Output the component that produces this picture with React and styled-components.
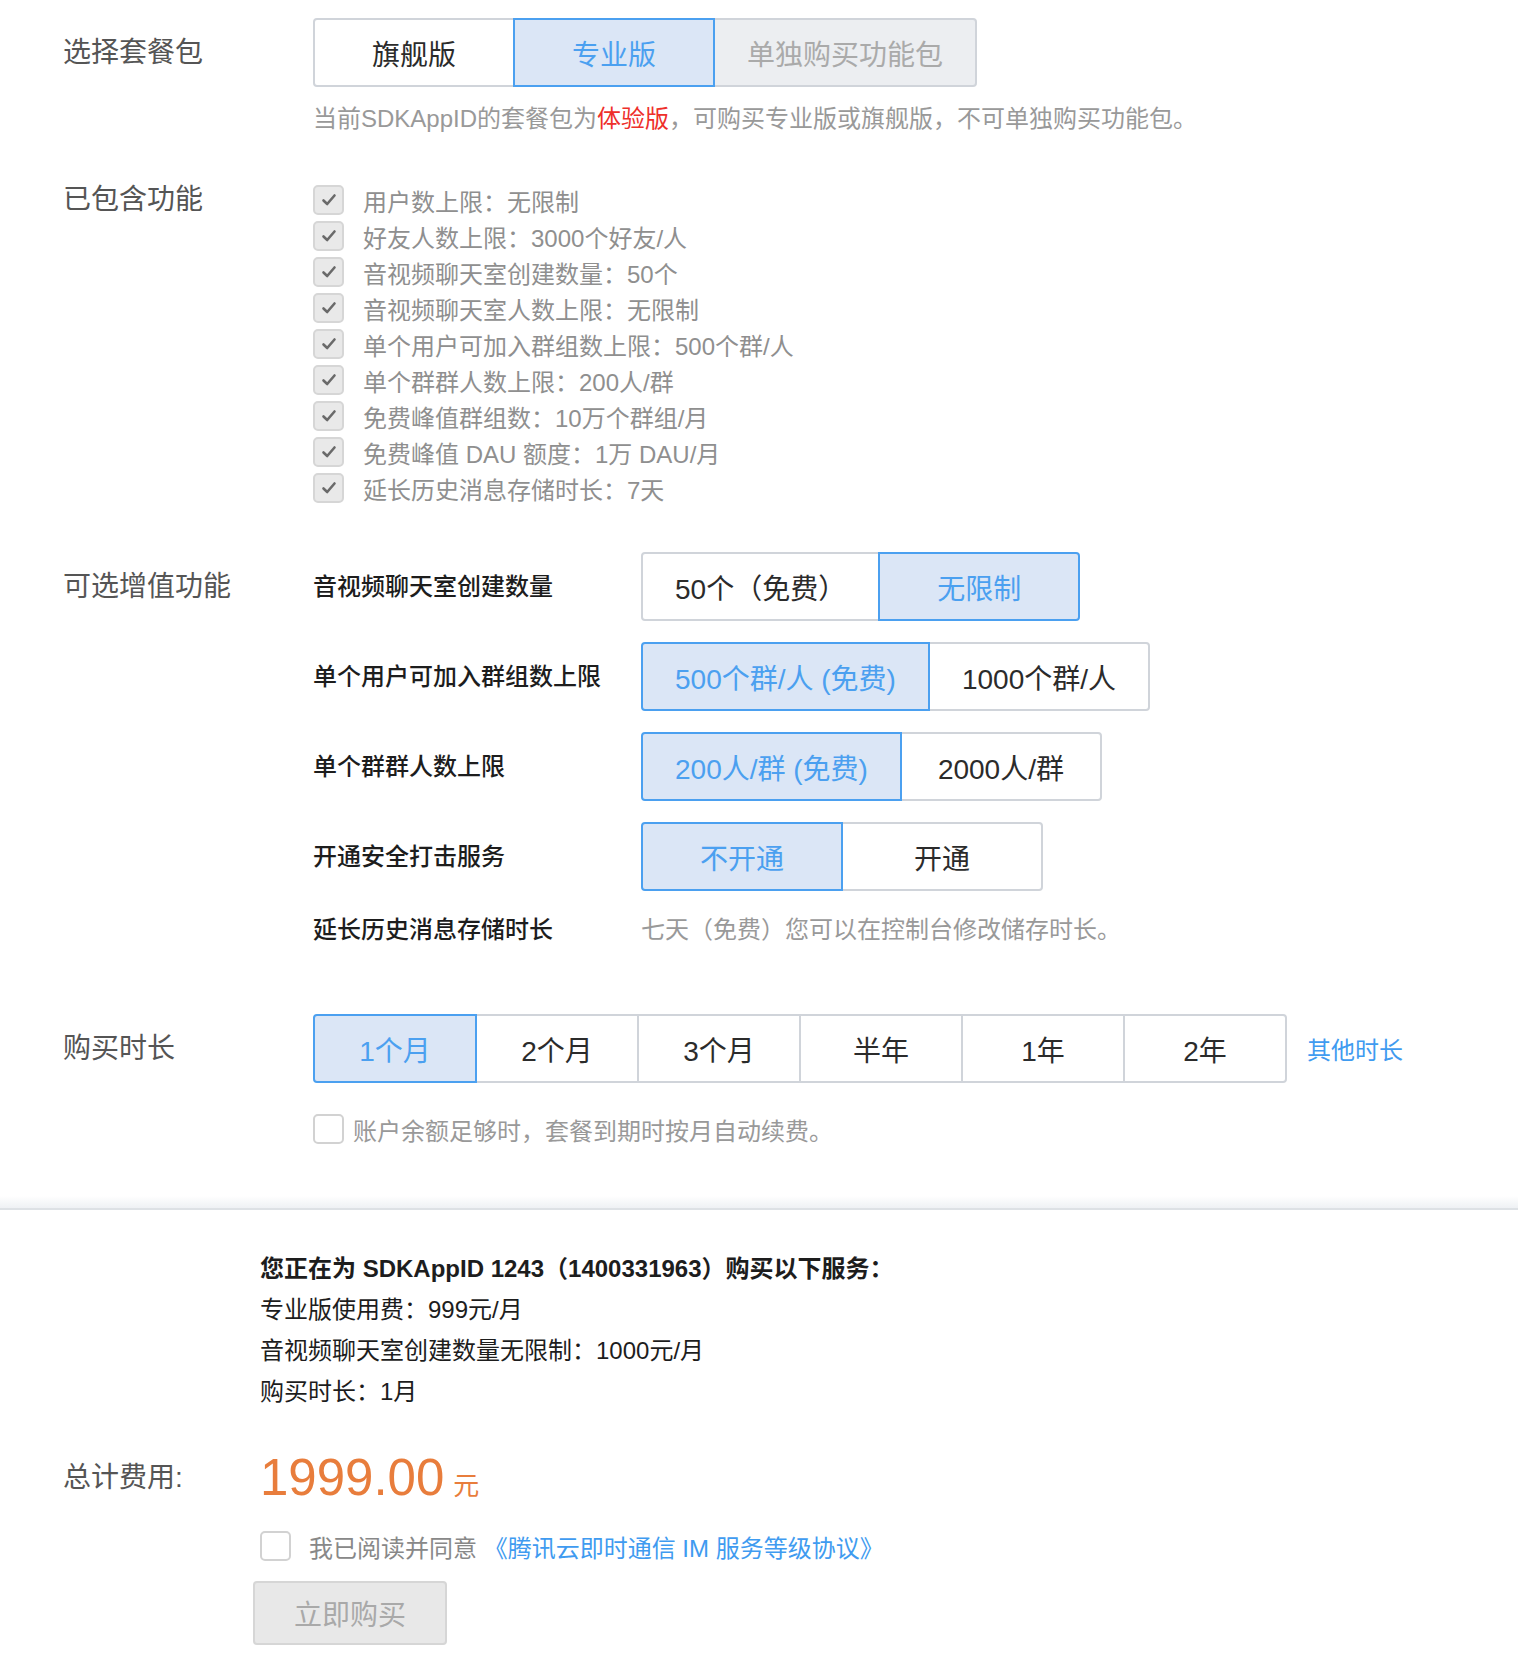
import React, { useState } from 'react';
import styled, { createGlobalStyle } from 'styled-components';

const GlobalStyle = createGlobalStyle`
  body {
    margin: 0;
    background: #fff;
    font-family: "Liberation Sans", "Noto Sans CJK SC", sans-serif;
    color: #333;
  }
`;

const Page = styled.div`
  padding-top: 18px;
  padding-bottom: 19px;
`;

const Section = styled.section`
  display: grid;
  grid-template-columns: ${({ labelWidth }) => labelWidth || 250}px 1fr;
  padding-left: 63px;
  margin-top: ${({ mt }) => mt || 0}px;
`;

const SectionLabel = styled.div`
  font-size: 28px;
  color: #555;
  line-height: ${({ lh }) => lh}px;
`;

const Content = styled.div`
  display: flex;
  flex-direction: column;
  align-items: flex-start;
`;

const Group = styled.div`
  display: flex;
`;

const Seg = styled.button`
  height: ${({ h }) => h || 69}px;
  min-width: ${({ w }) => w || 202}px;
  padding: 0 32px;
  margin: 0 0 0 -2px;
  font-family: inherit;
  font-size: 28px;
  border: 2px solid ${({ active }) => (active ? '#4ba0f0' : '#d0d4da')};
  background: ${({ active, disabled }) =>
    active ? '#dbe6f6' : disabled ? '#eceef1' : '#fff'};
  color: ${({ active, disabled }) =>
    active ? '#4ba0f0' : disabled ? '#aaa' : '#2b2b2b'};
  position: relative;
  z-index: ${({ active }) => (active ? 1 : 0)};
  cursor: pointer;
  white-space: nowrap;

  &:first-child {
    margin-left: 0;
    border-radius: 4px 0 0 4px;
  }
  &:last-child {
    border-radius: 0 4px 4px 0;
  }
`;

const Hint = styled.p`
  margin: 14px 0 0;
  font-size: 24px;
  line-height: 36px;
  color: #999;
`;

const Red = styled.span`
  color: #ee2f2a;
`;

const FeatureRow = styled.div`
  display: flex;
  align-items: center;
  height: 36px;
  gap: 19px;
  font-size: 24px;
  color: #8f8f8f;
`;

const Box = styled.span`
  width: 31px;
  height: 30px;
  box-sizing: border-box;
  border-radius: 5px;
  border: 2px solid ${({ checked }) => (checked ? '#d6d6d6' : '#d2d2d2')};
  background: ${({ checked }) => (checked ? '#e9e9e9' : '#fff')};
  display: flex;
  align-items: center;
  justify-content: center;
  flex-shrink: 0;
`;

const OptionRow = styled.div`
  display: grid;
  grid-template-columns: 328px auto;
  align-items: center;
  margin-top: ${({ mt }) => mt || 0}px;
`;

const SubLabel = styled.div`
  font-size: 24px;
  font-weight: 500;
  color: #1d1d1d;
  line-height: 36px;
`;

const Note = styled.div`
  font-size: 24px;
  color: #999;
  line-height: 36px;
`;

const DurationWrap = styled.div`
  display: flex;
  align-items: center;
  gap: 20px;
`;

const Link = styled.a`
  color: #3f9bf0;
  font-size: 24px;
  text-decoration: none;
  cursor: pointer;
`;

const CheckLine = styled.label`
  display: flex;
  align-items: center;
  gap: ${({ gap }) => gap}px;
  height: 36px;
  margin-top: ${({ mt }) => mt || 0}px;
  font-size: 24px;
  color: ${({ tone }) => tone || '#999'};
  cursor: pointer;
`;

const Divider = styled.div`
  margin-top: 49px;
  height: 12px;
  background: linear-gradient(to bottom, rgba(238, 241, 244, 0), #eef1f4);
  border-bottom: 2px solid #dde1e5;
`;

const Summary = styled.div`
  font-size: 24px;
  line-height: 41px;
  color: #1d1d1d;
`;

const SummaryTitle = styled.div`
  font-weight: 700;
`;

const Price = styled.div`
  display: flex;
  align-items: baseline;
  gap: 9px;
  color: #e87d3c;
  line-height: 64px;
`;

const Amount = styled.span`
  font-size: 51px;
`;

const Unit = styled.span`
  font-size: 26px;
`;

const BuyButton = styled.button`
  margin: 17px 0 0 -7px;
  width: 194px;
  height: 64px;
  border: 2px solid #d6d6d6;
  border-radius: 4px;
  background: #e8e8e8;
  color: #a9a9a9;
  font-family: inherit;
  font-size: 28px;
  cursor: not-allowed;
`;

const Check = () => (
  <svg width="16" height="14" viewBox="0 0 16 14">
    <path d="M2.5 7.5 L6.2 11 L13.5 2.5" fill="none" stroke="#6a6a6a" strokeWidth="2.6" strokeLinecap="round" strokeLinejoin="round" />
  </svg>
);

const features = [
  '用户数上限：无限制',
  '好友人数上限：3000个好友/人',
  '音视频聊天室创建数量：50个',
  '音视频聊天室人数上限：无限制',
  '单个用户可加入群组数上限：500个群/人',
  '单个群群人数上限：200人/群',
  '免费峰值群组数：10万个群组/月',
  '免费峰值 DAU 额度：1万 DAU/月',
  '延长历史消息存储时长：7天',
];

const options = [
  { label: '音视频聊天室创建数量', items: ['50个（免费）', '无限制'], init: 1 },
  { label: '单个用户可加入群组数上限', items: ['500个群/人 (免费)', '1000个群/人'], init: 0 },
  { label: '单个群群人数上限', items: ['200人/群 (免费)', '2000人/群'], init: 0 },
  { label: '开通安全打击服务', items: ['不开通', '开通'], init: 0 },
];

const durations = ['1个月', '2个月', '3个月', '半年', '1年', '2年'];

const OptionSelect = ({ label, items, init, mt }) => {
  const [sel, setSel] = useState(init);
  return (
    <OptionRow mt={mt}>
      <SubLabel>{label}</SubLabel>
      <Group>
        {items.map((it, i) => (
          <Seg key={it} active={sel === i} onClick={() => setSel(i)}>
            {it}
          </Seg>
        ))}
      </Group>
    </OptionRow>
  );
};

const App = () => {
  const [plan, setPlan] = useState(1);
  const [dur, setDur] = useState(0);
  const [renew, setRenew] = useState(false);
  const [agree, setAgree] = useState(false);

  return (
    <>
      <GlobalStyle />
      <Page>
        <Section>
          <SectionLabel lh={69}>选择套餐包</SectionLabel>
          <Content>
            <Group>
              <Seg active={plan === 0} onClick={() => setPlan(0)}>旗舰版</Seg>
              <Seg active={plan === 1} onClick={() => setPlan(1)}>专业版</Seg>
              <Seg disabled>单独购买功能包</Seg>
            </Group>
            <Hint>
              当前SDKAppID的套餐包为<Red>体验版</Red>，可购买专业版或旗舰版，不可单独购买功能包。
            </Hint>
          </Content>
        </Section>

        <Section mt={45}>
          <SectionLabel lh={36}>已包含功能</SectionLabel>
          <Content>
            {features.map((f) => (
              <FeatureRow key={f}>
                <Box checked>
                  <Check />
                </Box>
                {f}
              </FeatureRow>
            ))}
          </Content>
        </Section>

        <Section mt={46}>
          <SectionLabel lh={69}>可选增值功能</SectionLabel>
          <Content>
            {options.map((o, i) => (
              <OptionSelect key={o.label} {...o} mt={i ? 21 : 0} />
            ))}
            <OptionRow mt={21}>
              <SubLabel>延长历史消息存储时长</SubLabel>
              <Note>七天（免费）您可以在控制台修改储存时长。</Note>
            </OptionRow>
          </Content>
        </Section>

        <Section mt={66}>
          <SectionLabel lh={69}>购买时长</SectionLabel>
          <Content>
            <DurationWrap>
              <Group>
                {durations.map((d, i) => (
                  <Seg key={d} w={164} active={dur === i} onClick={() => setDur(i)}>
                    {d}
                  </Seg>
                ))}
              </Group>
              <Link>其他时长</Link>
            </DurationWrap>
            <CheckLine gap={9} mt={28} onClick={() => setRenew(!renew)}>
              <Box checked={renew}>{renew && <Check />}</Box>
              账户余额足够时，套餐到期时按月自动续费。
            </CheckLine>
          </Content>
        </Section>

        <Divider />

        <Section labelWidth={197} mt={38}>
          <div />
          <Summary>
            <SummaryTitle>您正在为 SDKAppID 1243（1400331963）购买以下服务：</SummaryTitle>
            <div>专业版使用费：999元/月</div>
            <div>音视频聊天室创建数量无限制：1000元/月</div>
            <div>购买时长：1月</div>
          </Summary>
        </Section>

        <Section labelWidth={197} mt={34}>
          <SectionLabel lh={64}>总计费用:</SectionLabel>
          <Content>
            <Price>
              <Amount>1999.00</Amount>
              <Unit>元</Unit>
            </Price>
            <CheckLine gap={18} mt={10} tone="#888" onClick={() => setAgree(!agree)}>
              <Box checked={agree}>{agree && <Check />}</Box>
              <span>
                我已阅读并同意 <Link>《腾讯云即时通信 IM 服务等级协议》</Link>
              </span>
            </CheckLine>
            <BuyButton disabled={!agree}>立即购买</BuyButton>
          </Content>
        </Section>
      </Page>
    </>
  );
};

export default App;
